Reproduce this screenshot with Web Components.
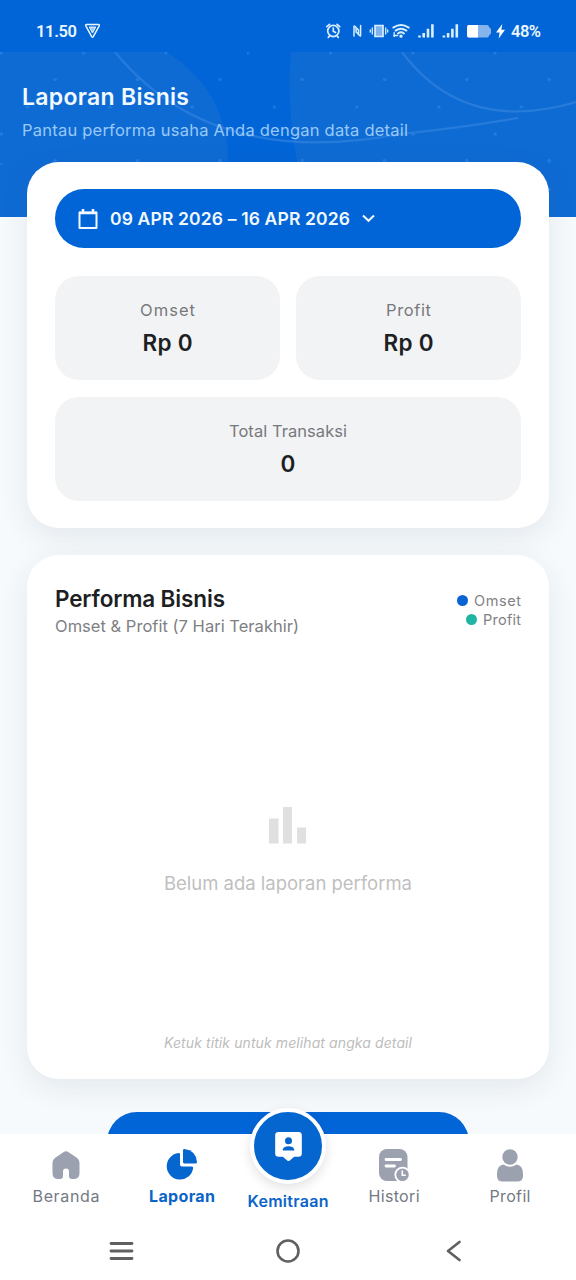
<!DOCTYPE html>
<html lang="id">
<head>
<meta charset="utf-8">
<title>Laporan Bisnis</title>
<style>
html, body { margin: 0; padding: 0; background: #f6fafd; }
body { width: 576px; height: 1280px; overflow: hidden; font-family: Inter, "Noto Sans", sans-serif; }
</style>
</head>
<body>
<report-app></report-app>
<script>
const define = (name, html, setup) => {
  const tpl = document.createElement('template');
  tpl.innerHTML = html;
  customElements.define(name, class extends HTMLElement {
    connectedCallback() {
      if (this.shadowRoot) return;
      this.attachShadow({ mode: 'open' }).append(tpl.content.cloneNode(true));
      if (setup) setup(this, this.shadowRoot);
    }
  });
};

/* One line of text, tracked so that it fills the width in its "w" attribute. */
define('text-line', `<style>
:host { display: block; white-space: nowrap; width: fit-content; }
span { display: inline-block; }
</style><span><slot></slot></span>`, (el, root) => {
  const span = root.querySelector('span');
  const want = +el.getAttribute('w');
  if (!want) return;
  const n = el.textContent.length;
  const have = span.getBoundingClientRect().width;
  const gap = (want - have) / (n - 1);
  span.style.letterSpacing = gap + 'px';
  span.style.marginRight = -gap + 'px';
});

define('status-bar', `<style>
:host { display: flex; height: 52px; box-sizing: border-box; padding: 10px 35px 0 36px; align-items: center; justify-content: space-between; background: #0265d7; color: #e9f6ff; font: 600 16.500px Roboto, sans-serif; }
div { display: flex; align-items: center; }
svg { display: block; }
</style>
<div><text-line w="41">11.50</text-line>
<svg style="margin-left:7px" width="17" height="16" viewBox="0 0 17 16" fill="none" stroke="#e9f6ff" stroke-width="1.500" stroke-linejoin="round"><path d="M2.600 1.500h11.800q1.400 0 .8 1.300L9.300 13.600q-.8 1.200-1.600 0L1.800 2.800q-.6-1.300.8-1.300z"/><path d="M5.300 4h6.400l-3.200 6z" fill="#9cc9f5" stroke-width="1"/></svg></div>
<div>
<svg width="179" height="18" viewBox="326 22 179 18" fill="none" stroke="#d8efff" stroke-width="1.700" stroke-linecap="round">
<circle cx="333.300" cy="31" r="5.600"/><path d="M333.300 28v3.300l2.200 1.200M326.900 26.600l2.600-2.200M339.700 26.600l-2.600-2.200M329.500 36l-1.200 1.300M337.100 36l1.200 1.300"/>
<path d="M354 36v-9.500q0-1 .8-.3l3.700 3.800v4M360.600 25.500v10q0 1-.8.300l-3.700-3.800v-4" stroke-width="1.500"/>
<path d="M375 25.500h8v11h-8z" fill="#7fb3ec"/><path d="M372.300 28v6M370.300 30v2M385.700 28v6M387.700 30v2" stroke-width="1.300"/>
<path d="M393.300 27.600q7.700-5.200 15.400 0M395.600 30.600q5.400-3.800 10.800 0M398 33.500q3-2.300 6 0" stroke-width="1.900"/><circle cx="401" cy="36.200" r=".8" fill="#d8efff"/><path d="M394.200 32.500v4M393.700 35.500h4" stroke-width="1.300"/>
<g stroke-width="2.600" stroke-linecap="butt"><path d="M419.500 35.600v2M423.700 33v4.600M428 28.800v8.800M432.400 24.300v13.300M443.900 35.600v2M448.100 33v4.600M452.400 28.800v8.800M456.800 24.300v13.300"/></g>
<path d="M469 25h18q2 0 2 2l2 2v4.500l-2 2q0 2-2 2h-18q-2 0-2-2v-8.500q0-2 2-2z" fill="#86b5ee" stroke="none"/><path d="M469 25h9v12.500h-9q-2 0-2-2v-8.500q0-2 2-2z" fill="#fff" stroke="none"/>
<path d="M502.300 24l-6.300 8.400h3.600l-.9 6 6.300-8.600h-3.700z" fill="#fff" stroke="none"/>
</svg>
<text-line style="margin-left:6px" w="30">48%</text-line></div>`);

define('page-hero', `<style>
:host { display: grid; height: 165px; background: #0265d7; overflow: hidden; }
svg, .copy { grid-area: 1 / 1; }
svg { display: block; }
.copy { padding: 31px 22px 0; }
.title { font-size: 23px; line-height: 28px; font-weight: 600; color: #f2faff; }
.sub { font-size: 16.500px; line-height: 22px; margin-top: 8px; color: #99c9f7; }
</style>
<svg width="576" height="165" viewBox="0 52 576 165">
<defs><pattern id="dots" x="0" y="52" width="82.300" height="110" patternUnits="userSpaceOnUse">
<g fill="#6fb4f8" opacity=".24"><circle cx="1" cy="1" r="1.600"/><circle cx="55.300" cy="27.500" r="1.600"/><circle cx="27.500" cy="55" r="1.600"/><circle cx="1.500" cy="82" r="1.600"/><circle cx="55.300" cy="108.400" r="1.600"/></g></pattern></defs>
<path d="M0 52H167Q228 92 228 162Q228 195 215 217H0z" fill="#0f6bd4"/>
<path d="M291 52H576V217H311Q284 130 291 52z" fill="#0f6bd4"/>
<rect y="52" width="576" height="165" fill="url(#dots)"/>
<g fill="none" stroke="#3384e0" stroke-width="2.200" opacity=".65"><path d="M115 52Q212 170 400 134Q460 128 518 118"/><path d="M402 52Q464 135 576 102"/></g>
</svg>
<div class="copy"><text-line class="title" w="167">Laporan Bisnis</text-line><text-line class="sub" w="386">Pantau performa usaha Anda dengan data detail</text-line></div>`);

define('soft-card', `<style>
:host { display: block; box-sizing: border-box; background: #fff; border-radius: 32px; padding: 27px 28px 28px 28px; box-shadow: 0 9px 30px rgba(40,55,70,.09); }
</style><slot></slot>`);

define('date-pill', `<style>
:host { display: flex; align-items: center; height: 59px; box-sizing: border-box; padding-left: 23px; border-radius: 29px; background: #0265d7; color: #f1f9ff; font-size: 17.500px; font-weight: 600; }
::slotted(*) { margin: 0 12px; }
</style>
<svg width="20" height="22" viewBox="0 0 20 22" fill="none" stroke="currentColor" stroke-width="2"><path d="M1.500 4.500h17v15.500h-17z" stroke-linejoin="round"/><path d="M1 5h18M5 1v3M15 1v3" stroke-width="2.600"/></svg>
<slot></slot>
<svg width="13" height="9" viewBox="0 0 13 9" fill="none" stroke="currentColor" stroke-width="2"><path d="M1 1.500l5.500 5.300L12 1.500"/></svg>`);

define('stat-tile', `<style>
:host { display: flex; flex-direction: column; align-items: center; height: 104px; box-sizing: border-box; padding-top: 22px; border-radius: 24px; background: #f2f3f5; }
.label { font-size: 16.500px; line-height: 24px; color: #77797c; }
.value { font-size: 22.500px; line-height: 28px; margin-top: 7px; font-weight: 600; color: #1c1f23; }
</style><div class="label"><slot name="label"></slot></div><div class="value"><slot></slot></div>`);

define('legend-item', `<style>
:host { display: flex; align-items: center; justify-content: flex-end; gap: 6px; height: 19px; font-size: 14.500px; color: #808285; }
i { width: 11px; height: 11px; border-radius: 50%; background: var(--dot); }
</style><i></i><slot></slot>`);

define('chart-panel', `<style>
:host { display: flex; flex-direction: column; height: 471px; }
header { display: flex; justify-content: space-between; align-items: flex-start; padding-top: 3px; }
.title { font-size: 22.500px; line-height: 28px; font-weight: 600; color: #1d1f22; }
.sub { font-size: 16.500px; line-height: 24px; margin-top: 1px; color: #7e8082; }
.legend { padding-top: 6px; }
.empty { display: flex; flex-direction: column; align-items: center; margin-top: 168px; color: #bfbfbf; font-size: 18.500px; line-height: 26px; gap: 26px; }
.hint { margin: auto auto 0; font-size: 14px; line-height: 20px; font-style: italic; color: #bdbdbd; }
svg { display: block; }
</style>
<header><div><text-line class="title" w="170">Performa Bisnis</text-line><text-line class="sub" w="244">Omset &amp; Profit (7 Hari Terakhir)</text-line></div>
<div class="legend"><legend-item style="--dot:#0a63d3"><text-line w="47">Omset</text-line></legend-item><legend-item style="--dot:#1fb5a2"><text-line w="38">Profit</text-line></legend-item></div></header>
<div class="empty"><svg width="38" height="38" viewBox="0 0 38 38" fill="#e0e0e0"><path d="M0 12.500h9.500v25H0zM14 1h9v36.500h-9zM28 21.500h9v16h-9z"/></svg><text-line w="248">Belum ada laporan performa</text-line></div>
<text-line class="hint" w="248">Ketuk titik untuk melihat angka detail</text-line>`);

define('nav-item', `<style>
:host { display: flex; flex-direction: column; align-items: center; width: 116px; font-size: 16px; line-height: 22px; color: #737983; }
:host([active]) { color: #0b64c8; font-weight: 700; }
:host([center]) { color: #0b64c8; font-weight: 600; }
.icon { height: 36px; display: flex; align-items: center; justify-content: center; margin: 13px 0 2px; }
:host([center]) .icon { height: 76px; margin: -26px 0 6px; }
</style><div class="icon"><slot name="icon"></slot></div><slot></slot>`);

define('bottom-nav', `<style>
:host { display: block; height: 146px; background: #fff; }
nav { display: flex; justify-content: center; height: 88px; }
nav-item { flex: none; }
.mid { margin: 0 -10px; }
svg { display: block; }
.fab { width: 68px; height: 68px; border: 4px solid #fff; border-radius: 50%; background: #0666cf; display: grid; place-items: center; box-shadow: 0 4px 12px rgba(0,0,0,.12); }
.keys { display: flex; justify-content: space-between; padding: 17px 115px 0 109px; height: 24px; }
.home { margin-right: 4px; }
</style>
<nav>
<nav-item><svg slot="icon" width="28" height="28" viewBox="0 0 28 28"><path d="M11.400 1.200q2.600-1.700 5.200 0l8.200 5.500q2.700 1.900 2.700 5v10.300q0 6-6 6h-1.500q-3 0-3-3v-4.500q0-3-3-3t-3 3V25q0 3-3 3H6.500q-6 0-6-6V11.700q0-3.100 2.700-5z" fill="#9ca1af"/></svg><text-line w="67">Beranda</text-line></nav-item>
<nav-item active><svg slot="icon" width="32" height="32" viewBox="0 0 32 32" fill="#0666cf"><path d="M14 5.100q0-1.200-1.300-1.100A13.300 13.300 0 1 0 27.200 19q.2-1.500-1.300-1.500H16q-2 0-2-2z"/><path d="M17 1.300q0-1.300 1.400-1.200Q30 1.600 31 13q0 1.600-1.500 1.600H18.700q-1.700 0-1.700-1.700z"/></svg><text-line w="66">Laporan</text-line></nav-item>
<nav-item center class="mid"><div slot="icon" class="fab"><svg width="27" height="29" viewBox="0 0 28 30.500"><path d="M3.500 0h21Q28 0 28 3.500v19q0 3.500-3.500 3.500H20l-4.600 4q-1.400 1.200-2.800 0L8 26H3.500Q0 26 0 22.500v-19Q0 0 3.500 0z" fill="#fff"/><circle cx="14" cy="9.200" r="3.700" fill="#0666cf"/><path d="M8 19.500v-1q1-3.500 6-3.500t6 3.500v1z" fill="#0666cf"/></svg></div><text-line w="81">Kemitraan</text-line></nav-item>
<nav-item><svg slot="icon" width="32" height="33" viewBox="0 0 32 33"><rect x="1" y="0" width="28.500" height="32" rx="8" fill="#9ca1af"/><path d="M8 10.500h14.500M8 17h8.500" stroke="#fff" stroke-width="2.800" stroke-linecap="round"/><circle cx="24.500" cy="25.800" r="7.200" fill="#9ca1af" stroke="#fff" stroke-width="1.800"/><path d="M24.300 22v4.200h3" fill="none" stroke="#fff" stroke-width="1.600" stroke-linecap="round"/></svg><text-line w="51">Histori</text-line></nav-item>
<nav-item><svg slot="icon" width="28" height="33" viewBox="0 0 28 33" fill="#9ca1af"><circle cx="14" cy="8" r="7.700"/><path d="M7.500 15.500q6.500 4.600 13 0 6.500.8 6.500 9.500v2q0 5.500-6 5.500H7q-6 0-6-5.500v-2q0-8.700 6.500-9.500z"/></svg><text-line w="41">Profil</text-line></nav-item>
</nav>
<div class="keys">
<svg width="25" height="24" viewBox="0 0 25 24" stroke="#606060" stroke-width="2.800" stroke-linecap="round"><path d="M2 4.500h21M2 12h21M2 19.500h21"/></svg>
<svg class="home" width="24" height="24" viewBox="0 0 24 24" fill="none" stroke="#606060" stroke-width="2.600"><circle cx="12" cy="12" r="10.500"/></svg>
<svg width="15" height="24" viewBox="0 0 15 24" fill="none" stroke="#606060" stroke-width="2.600" stroke-linecap="round" stroke-linejoin="round"><path d="M13.500 3L2 12l11.500 9"/></svg>
</div>`);

define('report-app', `<style>
:host { display: flex; flex-direction: column; width: 576px; height: 1280px; }
main { flex: 1; min-height: 0; overflow: hidden; display: flex; flex-direction: column; }
page-hero, status-bar { flex: none; }
.cards { margin: -55px 27px 0; display: flex; flex-direction: column; gap: 27px; }
.summary { height: 366px; } .chart { height: 524px; }
.cards > * { flex: none; position: relative; }
.grid { display: grid; grid-template-columns: 1fr 1fr; gap: 17px 16px; margin-top: 28px; }
.wide { grid-column: 1 / 3; }
.cta { width: 362px; height: 60px; border-radius: 32px; background: #0265d7; align-self: center; margin-top: 6px; }
bottom-nav { flex: none; position: relative; }
</style>
<status-bar></status-bar>
<main>
<page-hero></page-hero>
<div class="cards">
<soft-card class="summary">
<date-pill><text-line w="240">09 APR 2026 – 16 APR 2026</text-line></date-pill>
<div class="grid">
<stat-tile><text-line slot="label" w="55">Omset</text-line><text-line w="50">Rp 0</text-line></stat-tile>
<stat-tile><text-line slot="label" w="45">Profit</text-line><text-line w="50">Rp 0</text-line></stat-tile>
<stat-tile class="wide"><text-line slot="label" w="118">Total Transaksi</text-line><text-line>0</text-line></stat-tile>
</div>
</soft-card>
<soft-card class="chart"><chart-panel></chart-panel></soft-card>
<div class="cta"></div>
</div>
</main>
<bottom-nav></bottom-nav>`);
</script>
</body>
</html>
